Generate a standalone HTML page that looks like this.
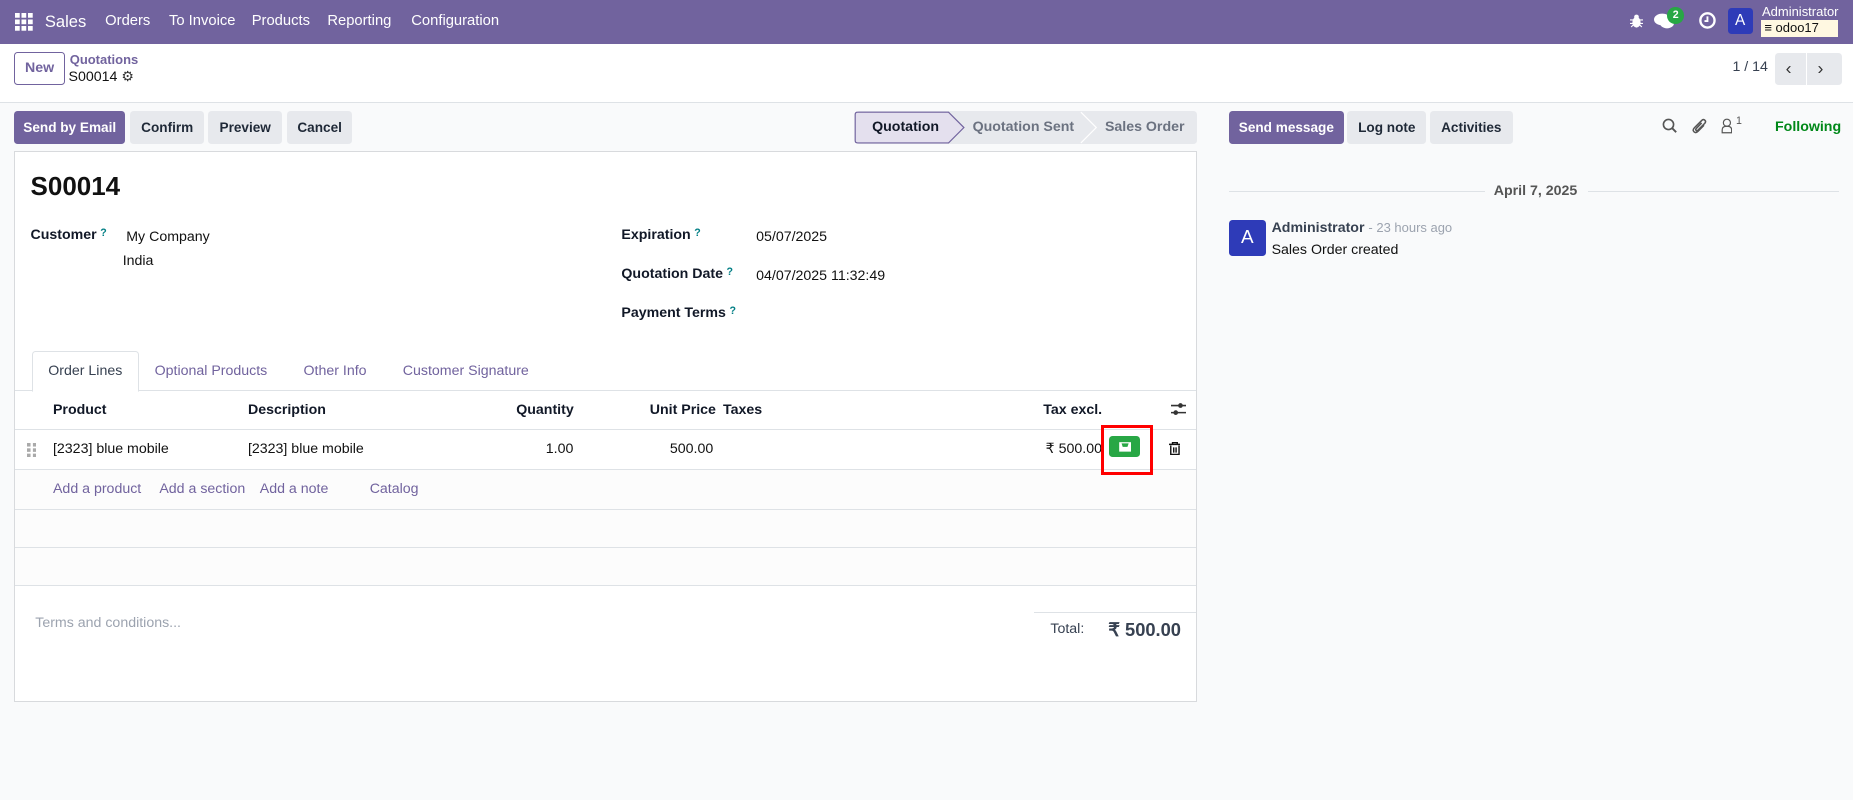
<!DOCTYPE html>
<html><head><meta charset="utf-8"><style>
html{zoom:1.18176}
*{box-sizing:border-box;margin:0;padding:0}
body{width:1568px;height:677px;overflow:hidden;background:#f9fafb;font-family:"Liberation Sans",sans-serif;font-size:12px;color:#374151;position:relative}
.a{position:absolute;white-space:nowrap}
.nav{position:absolute;left:0;top:0;width:1568px;height:37px;background:#71639e;color:#fff}
.cp{position:absolute;left:0;top:37px;width:1568px;height:50px;background:#fff;border-bottom:1px solid #dee2e6}
.btn{position:absolute;height:28px;line-height:28px;border-radius:3px;background:#e7e9ed;color:#1f2937;font-weight:bold;text-align:center;font-size:11.5px}
.pr{background:#71639e;color:#fff}
.sheet{position:absolute;left:12px;top:128px;width:1001px;height:466px;background:#fff;border:1px solid #d8dadd}
.b{font-weight:bold;color:#111827}
.q{color:#017e84;font-size:9px;vertical-align:top;margin-left:3px}
.line{position:absolute;left:0;width:999px;border-top:1px solid #dee2e6}
.lnk{color:#71639e}
</style></head><body>
<div class="nav">
 <svg class="a" style="left:13px;top:11px" width="15" height="15" viewBox="0 0 15 15" fill="#fff"><rect x="0" y="0" width="4" height="4"/><rect x="5.5" y="0" width="4" height="4"/><rect x="11" y="0" width="4" height="4"/><rect x="0" y="5.5" width="4" height="4"/><rect x="5.5" y="5.5" width="4" height="4"/><rect x="11" y="5.5" width="4" height="4"/><rect x="0" y="11" width="4" height="4"/><rect x="5.5" y="11" width="4" height="4"/><rect x="11" y="11" width="4" height="4"/></svg>
 <div class="a" style="left:38px;top:10px;font-size:14px">Sales</div>
 <div class="a" style="left:89px;top:11px;font-size:12.5px">Orders</div>
 <div class="a" style="left:143px;top:11px;font-size:12.5px">To Invoice</div>
 <div class="a" style="left:213px;top:11px;font-size:12.5px">Products</div>
 <div class="a" style="left:277px;top:11px;font-size:12.5px">Reporting</div>
 <div class="a" style="left:348px;top:11px;font-size:12.5px">Configuration</div>
 <svg class="a" style="left:1379px;top:12px" width="11" height="12" viewBox="0 0 11 12" fill="#fff"><ellipse cx="5.5" cy="7" rx="3.5" ry="4.5"/><circle cx="5.5" cy="2.5" r="2"/><path d="M0 5H11M0 8H11M1 11L3 9M10 11L8 9" stroke="#fff"/></svg>
 <svg class="a" style="left:1400px;top:11px" width="18" height="14" viewBox="0 0 18 14" fill="#fff"><ellipse cx="7" cy="5.5" rx="7" ry="5"/><ellipse cx="11" cy="8.5" rx="6" ry="4.5"/></svg>
 <div class="a" style="left:1411px;top:6px;width:14px;height:14px;border-radius:7px;background:#28a745;font-size:9px;text-align:center;line-height:14px;font-weight:bold">2</div>
 <svg class="a" style="left:1437px;top:9px" width="16" height="16"><circle cx="8" cy="8" r="6" stroke="#fff" stroke-width="2" fill="none"/><path d="M8 4.5V8.5H5.5" stroke="#fff" stroke-width="1.6" fill="none"/></svg>
 <div class="a" style="left:1462px;top:7px;width:21px;height:22px;background:#2e3bb8;border-radius:3px;text-align:center;line-height:22px;font-size:13px">A</div>
 <div class="a" style="left:1491px;top:3px;font-size:11px">Administrator</div>
 <div class="a" style="left:1490px;top:17px;width:65px;height:14px;background:#fff8e1;color:#111;font-size:11px;line-height:14px;padding-left:3px">&#8801; odoo17</div>
</div>
<div class="cp">
 <div class="a" style="left:12px;top:7px;width:43px;height:28px;border:1px solid #71639e;border-radius:3px;color:#71639e;font-weight:bold;text-align:center;line-height:26px">New</div>
 <div class="a lnk" style="left:59px;top:7px;font-size:11px;font-weight:bold">Quotations</div>
 <div class="a" style="left:58px;top:21px;font-size:12px;color:#111">S00014 <span style="color:#333">&#9881;</span></div>
 <div class="a" style="left:1466px;top:13px;color:#374151">1 / 14</div>
 <div class="a" style="left:1502px;top:8px;width:57px;height:27px;background:#e7e9ed;border-radius:3px"></div>
 <div class="a" style="left:1528px;top:8px;width:1px;height:27px;background:#fff"></div>
 <div class="a" style="left:1511px;top:12px;font-size:15px;color:#333">&#8249;</div>
 <div class="a" style="left:1538px;top:12px;font-size:15px;color:#333">&#8250;</div>
</div>
<div class="btn pr" style="left:12px;top:94px;width:94px">Send by Email</div>
<div class="btn" style="left:110px;top:94px;width:63px">Confirm</div>
<div class="btn" style="left:176px;top:94px;width:63px">Preview</div>
<div class="btn" style="left:243px;top:94px;width:55px">Cancel</div>
<div class="a" style="left:724px;top:94px;width:289px;height:28px;background:#e7e9ed;border-radius:3px"></div>
<svg class="a" style="left:723px;top:94px" width="300" height="29"><path d="M1 3 Q1 1 3 1 H80 L93 14 L80 27 H3 Q1 27 1 25Z" fill="#e4e0ee" stroke="#71639e"/><path d="M192 1 L205 14 L192 27" fill="none" stroke="#fff"/></svg>
<div class="a b" style="left:738px;top:101px">Quotation</div>
<div class="a" style="left:823px;top:101px;color:#6b7280;font-weight:bold">Quotation Sent</div>
<div class="a" style="left:935px;top:101px;color:#6b7280;font-weight:bold">Sales Order</div>
<div class="sheet">
 <div class="a" style="left:13px;top:16px;font-size:22px;font-weight:bold;color:#111">S00014</div>
 <div class="a b" style="left:13px;top:63px">Customer<span class="q">?</span></div>
 <div class="a" style="left:94px;top:65px;color:#111">My Company</div>
 <div class="a" style="left:91px;top:85px;color:#111">India</div>
 <div class="a b" style="left:513px;top:63px">Expiration<span class="q">?</span></div>
 <div class="a" style="left:627px;top:65px;color:#111">05/07/2025</div>
 <div class="a b" style="left:513px;top:96px">Quotation Date<span class="q">?</span></div>
 <div class="a" style="left:627px;top:98px;color:#111">04/07/2025 11:32:49</div>
 <div class="a b" style="left:513px;top:129px">Payment Terms<span class="q">?</span></div>
 <div class="line" style="top:201px"></div>
 <div class="a" style="left:14px;top:168px;width:91px;height:35px;border:1px solid #dee2e6;border-bottom:1px solid #fff;border-radius:3px 3px 0 0;background:#fff"></div>
 <div class="a" style="left:28px;top:178px;color:#374151">Order Lines</div>
 <div class="a lnk" style="left:118px;top:178px">Optional Products</div>
 <div class="a lnk" style="left:244px;top:178px">Other Info</div>
 <div class="a lnk" style="left:328px;top:178px">Customer Signature</div>
 <div class="a b" style="left:32px;top:211px">Product</div>
 <div class="a b" style="left:197px;top:211px">Description</div>
 <div class="a b" style="left:424px;top:211px">Quantity</div>
 <div class="a b" style="left:537px;top:211px">Unit Price</div>
 <div class="a b" style="left:599px;top:211px">Taxes</div>
 <div class="a b" style="left:870px;top:211px">Tax excl.</div>
 <svg class="a" style="left:978px;top:211px" width="13" height="12"><path d="M0 3H13M0 9H13" stroke="#333" stroke-width="1.3"/><circle cx="8" cy="3" r="2" fill="#333"/><circle cx="4" cy="9" r="2" fill="#333"/></svg>
 <div class="line" style="top:234px"></div>
 <svg class="a" style="left:10px;top:246px" width="8" height="12" fill="#aaa"><rect x="0" y="0" width="3" height="3"/><rect x="5" y="0" width="3" height="3"/><rect x="0" y="4.5" width="3" height="3"/><rect x="5" y="4.5" width="3" height="3"/><rect x="0" y="9" width="3" height="3"/><rect x="5" y="9" width="3" height="3"/></svg>
 <div class="a" style="left:32px;top:244px;color:#111">[2323] blue mobile</div>
 <div class="a" style="left:197px;top:244px;color:#111">[2323] blue mobile</div>
 <div class="a" style="left:449px;top:244px;color:#111">1.00</div>
 <div class="a" style="left:554px;top:244px;color:#111">500.00</div>
 <div class="a" style="left:872px;top:244px;color:#111">₹ 500.00</div>
 <div class="line" style="top:268px"></div>
 <div class="a" style="left:0;top:269px;width:999px;height:98px;background:#fcfcfc"></div>
 <div class="a" style="left:919px;top:231px;width:44px;height:42px;border:3px solid #f00;z-index:5"></div>
 <div class="a" style="left:926px;top:240px;width:26px;height:18px;background:#28a745;border-radius:3px"></div>
 <svg class="a" style="left:933px;top:244px" width="12" height="10"><path d="M1 1H11V9H1Z" fill="#fff"/><path d="M3 2H9L8 5H4Z" fill="#28a745"/></svg>
 <svg class="a" style="left:976px;top:245px" width="10" height="11"><path d="M0 2H10M3 2V0.5H7V2M1.5 3V10.5H8.5V3M4 4.5V9M6 4.5V9" stroke="#111" stroke-width="1.2" fill="none"/></svg>
 <div class="a lnk" style="left:32px;top:278px">Add a product</div>
 <div class="a lnk" style="left:122px;top:278px">Add a section</div>
 <div class="a lnk" style="left:207px;top:278px">Add a note</div>
 <div class="a lnk" style="left:300px;top:278px">Catalog</div>
 <div class="line" style="top:302px"></div>
 <div class="line" style="top:334px"></div>
 <div class="line" style="top:366px"></div>
 <div class="a" style="left:17px;top:392px;color:#9ca3af">Terms and conditions...</div>
 <div class="a" style="left:862px;top:389px;width:137px;border-top:1px solid #dee2e6"></div>
 <div class="a" style="left:876px;top:397px;color:#374151">Total:</div>
 <div class="a" style="left:925px;top:395px;font-size:15.5px;font-weight:bold;color:#374151">₹ 500.00</div>
</div>
<div class="btn pr" style="left:1040px;top:94px;width:97px">Send message</div>
<div class="btn" style="left:1140px;top:94px;width:67px">Log note</div>
<div class="btn" style="left:1210px;top:94px;width:70px">Activities</div>
<svg class="a" style="left:1406px;top:100px" width="13" height="13"><circle cx="5.5" cy="5.5" r="4.3" stroke="#555" stroke-width="1.4" fill="none"/><path d="M8.5 8.5L12 12" stroke="#555" stroke-width="1.6"/></svg>
<svg class="a" style="left:1431px;top:99px" width="14" height="15" viewBox="0 0 14 15"><path d="M11 7L6 12Q4 14 2.5 12.5Q1 11 3 9L9 3Q10.5 1.5 11.8 2.8Q13 4 11.5 5.5L6 11Q5 12 4.3 11.3Q3.6 10.6 4.6 9.6L9 5" stroke="#555" stroke-width="1.3" fill="none"/></svg>
<svg class="a" style="left:1456px;top:100px" width="10" height="13"><circle cx="5" cy="4" r="3" stroke="#555" fill="none"/><path d="M1 12.5V10Q1 7 5 7Q9 7 9 10V12.5Z" stroke="#555" fill="none"/></svg>
<div class="a" style="left:1469px;top:97px;font-size:9px;color:#555">1</div>
<div class="a" style="left:1502px;top:101px;color:#008818;font-weight:bold">Following</div>
<div class="a" style="left:1040px;top:162px;width:217px;border-top:1px solid #dee2e6"></div>
<div class="a" style="left:1264px;top:155px;font-weight:bold;color:#555">April 7, 2025</div>
<div class="a" style="left:1344px;top:162px;width:212px;border-top:1px solid #dee2e6"></div>
<div class="a" style="left:1040px;top:186px;width:31px;height:31px;background:#2e3bb8;border-radius:3px;color:#fff;text-align:center;line-height:31px;font-size:16px">A</div>
<div class="a" style="left:1076px;top:186px"><span class="b" style="color:#374151">Administrator</span> <span style="color:#9ca3af;font-size:11px">- 23 hours ago</span></div>
<div class="a" style="left:1076px;top:205px;color:#111">Sales Order created</div>
</body></html>
